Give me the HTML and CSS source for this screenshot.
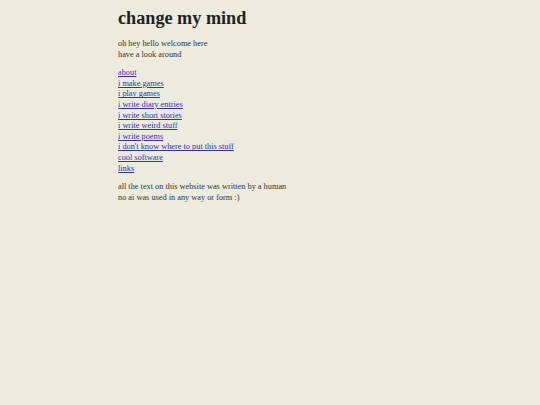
FILE: index.html
```html
<!DOCTYPE html>
<html>
<head>
<meta charset="utf-8">
<link rel="stylesheet" href="styles.css">
</head>
<body>
<main class="page">
  <h1 class="title">change my mind</h1>
  <p class="block">oh hey hello welcome here<br>have a look around</p>
  <nav class="block links">
    <a href="#">about</a>
    <a href="#">i make games</a>
    <a href="#">i play games</a>
    <a href="#">i write diary entries</a>
    <a href="#">i write short stories</a>
    <a href="#">i write weird stuff</a>
    <a href="#">i write poems</a>
    <a href="#">i don't know where to put this stuff</a>
    <a href="#">cool software</a>
    <a href="#">links</a>
  </nav>
  <p class="block">all the text on this website was written by a human<br>no ai was used in any way or form :)</p>
</main>
</body>
</html>
```
FILE: styles.css
```css
html, body {
  margin: 0;
  padding: 0;
  background: #ecebde;
}
body {
  font-family: "Liberation Serif", serif;
  font-size: 8.3px;
  line-height: 10.6px;
  color: #333;
}
.page {
  width: 304px;
  margin: 0 auto;
  padding-top: 8px;
}
.title {
  font-size: 18.2px;
  line-height: 20px;
  font-weight: bold;
  margin: 0 0 11px 0;
  color: #222;
}
.block {
  margin: 0 0 8px 0;
}
.links {
  display: flex;
  flex-direction: column;
  align-items: flex-start;
}
.links a {
  color: #3030c0;
}
```
